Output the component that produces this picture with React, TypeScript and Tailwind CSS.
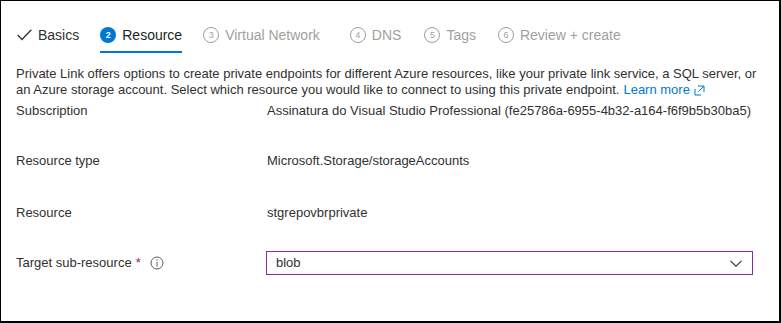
import React from "react";

const font = { fontFamily: '"Liberation Sans", Arial, sans-serif' };

function Step({ n, label }: { n: number; label: string }) {
  return (
    <div className="flex items-center h-[30px] text-[#a19f9d]">
      <span className="w-[16px] h-[16px] rounded-full border border-[#a19f9d] flex items-center justify-center text-[9px] leading-none mr-[6px]">
        {n}
      </span>
      <span className="text-[14px]">{label}</span>
    </div>
  );
}

export default function App() {
  return (
    <div
      className="w-[781px] h-[323px] bg-white border-l border-t border-r-2 border-b-2 border-black text-[#323130] text-[13px] overflow-hidden"
      style={font}
    >
      <div className="flex items-start pl-[16px] pt-[19px] h-[52px]">
        <div className="flex items-center h-[30px] mr-[21px]">
          <svg width="15" height="12" viewBox="0 0 15 12" className="mr-[6px]">
            <path d="M0.7 6 L5 10.5 L14.3 0.8" fill="none" stroke="#323130" strokeWidth="1.3" />
          </svg>
          <span className="text-[14px]">Basics</span>
        </div>
        <div className="flex flex-col mr-[21px]">
          <div className="flex items-center h-[30px]">
            <span className="w-[16px] h-[16px] rounded-full bg-[#0078d4] text-white flex items-center justify-center text-[9px] font-bold leading-none mr-[6px]">
              2
            </span>
            <span className="text-[14px] text-[#201f1e]">Resource</span>
          </div>
          <div className="h-[2px] bg-[#0078d4] mt-[1px]" />
        </div>
        <div className="mr-[30px]"><Step n={3} label="Virtual Network" /></div>
        <div className="mr-[23px]"><Step n={4} label="DNS" /></div>
        <div className="mr-[22px]"><Step n={5} label="Tags" /></div>
        <Step n={6} label="Review + create" />
      </div>
      <div className="pl-[15px] pr-[20px] mt-[13px] leading-[16px]">
        <div>
          Private Link offers options to create private endpoints for different Azure resources, like your private link
          service, a SQL server, or
        </div>
        <div className="flex items-center">
          <span>
            an Azure storage account. Select which resource you would like to connect to using this private endpoint.
          </span>
          <span className="text-[#0078d4] ml-[4px] flex items-center">
            <span>Learn more</span>
            <svg width="11" height="11" viewBox="0 0 11 11" className="ml-[4px]">
              <path d="M4 1H10V7 M10 1L4.5 6.5 M7 10H1V4" fill="none" stroke="#0078d4" strokeWidth="1" />
            </svg>
          </span>
        </div>
      </div>
      <div className="pl-[15px] mt-[4px]">
        <div className="flex items-center h-[17px]">
          <div className="w-[251px]">Subscription</div>
          <div>Assinatura do Visual Studio Professional (fe25786a-6955-4b32-a164-f6f9b5b30ba5)</div>
        </div>
        <div className="flex items-center h-[17px] mt-[33px]">
          <div className="w-[251px]">Resource type</div>
          <div>Microsoft.Storage/storageAccounts</div>
        </div>
        <div className="flex items-center h-[17px] mt-[35px]">
          <div className="w-[251px]">Resource</div>
          <div>stgrepovbrprivate</div>
        </div>
        <div className="flex items-center mt-[30px]">
          <div className="w-[250px] flex items-center">
            Target sub-resource
            <span className="text-[#a4262c] ml-[4px]">*</span>
            <svg width="14" height="14" viewBox="0 0 14 14" className="ml-[9px]">
              <circle cx="7" cy="7" r="6" fill="none" stroke="#605e5c" strokeWidth="1" />
              <path d="M7 6V10.5" stroke="#605e5c" strokeWidth="1" />
              <circle cx="7" cy="4" r="0.7" fill="#605e5c" />
            </svg>
          </div>
          <div className="w-[487px] h-[24px] border border-[#8a2da5] flex items-center justify-between pl-[9px] pr-[10px]">
            <span>blob</span>
            <svg width="12" height="7" viewBox="0 0 12 7">
              <path d="M0.5 0.8 L6 6.2 L11.5 0.8" fill="none" stroke="#323130" strokeWidth="1.1" />
            </svg>
          </div>
        </div>
      </div>
    </div>
  );
}
